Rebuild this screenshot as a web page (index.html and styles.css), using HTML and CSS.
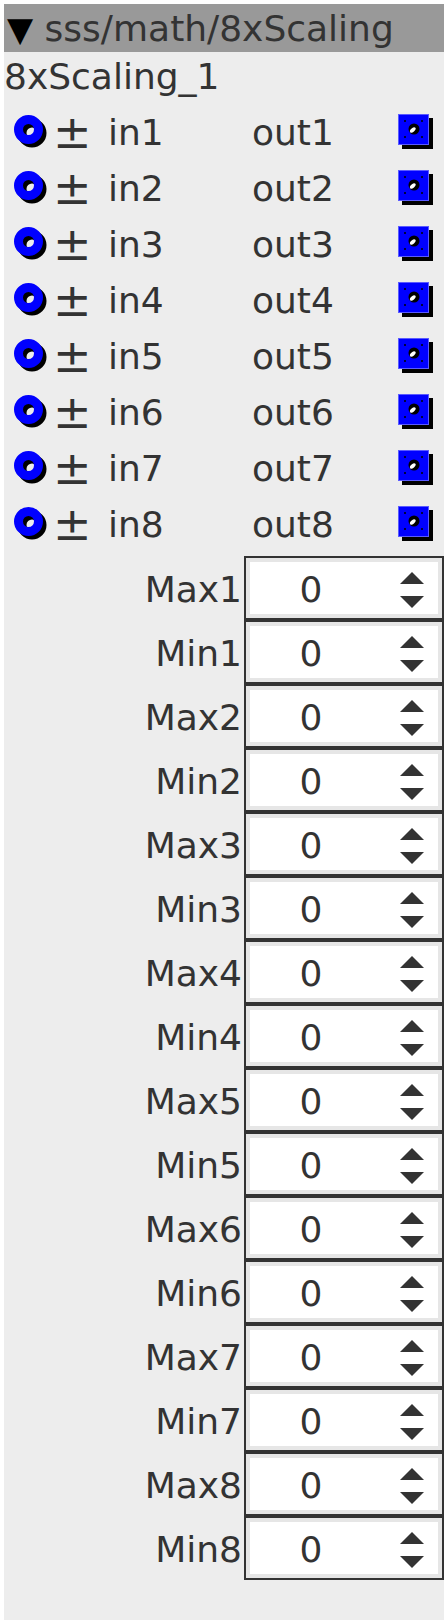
FILE: index.html
```html
<!DOCTYPE html>
<html lang="en">
<head>
   <meta charset="UTF-8">
   <meta name="viewport" content="width=device-width, initial-scale=1.0">
   <title>8xScaling</title>
   <link rel="stylesheet" href="styles.css">
</head>
<body>
   <div class="panel">
      <div class="title"><span class="arrow">&#9660;</span> sss/math/8xScaling</div>
      <div class="name">8xScaling_1</div>

      <div class="ports" id="ports"></div>
      <div class="params" id="params"></div>
   </div>

   <script>
      const ports = document.querySelector("#ports")
      const params = document.querySelector("#params")

      const inPort = `<svg class="port-in" width="36" height="36" viewBox="0 0 36 36">
            <circle cx="18" cy="18" r="10" fill="none" stroke="#000" stroke-width="9"/>
            <circle cx="14.5" cy="14.5" r="10" fill="none" stroke="#0000ff" stroke-width="9"/>
         </svg>`

      const outPort = `<svg class="port-out" width="36" height="36" viewBox="0 0 36 36">
            <rect x="4" y="4" width="31" height="31" fill="#000"/>
            <rect x="0.5" y="0.5" width="30" height="30" fill="#0000ff" stroke="#5a5aff"/>
            <circle cx="7" cy="7" r="1" fill="#000"/>
            <circle cx="24" cy="7" r="1" fill="#000"/>
            <circle cx="7" cy="23" r="1" fill="#000"/>
            <circle cx="24" cy="23" r="1" fill="#000"/>
            <circle cx="16" cy="15" r="5.5" fill="#000"/>
            <ellipse cx="14.8" cy="16" rx="3.4" ry="1.8" transform="rotate(-40 14.8 16)" fill="#fff"/>
         </svg>`

      for (let i = 1; i <= 8; i++) {
         ports.innerHTML += `<div class="port-row">
               ${inPort}
               <span class="pm">&plusmn;</span>
               <span class="in-label">in${i}</span>
               <span class="out-label">out${i}</span>
               ${outPort}
            </div>`
      }

      for (let i = 1; i <= 8; i++) {
         for (const kind of ["Max", "Min"]) {
            params.innerHTML += `<div class="param-row">
                  <label class="param-label">${kind}${i}</label>
                  <div class="spinbox">
                     <span class="value">0</span>
                     <span class="spin"><i class="up"></i><i class="down"></i></span>
                  </div>
               </div>`
         }
      }
   </script>
</body>
</html>
```

FILE: styles.css
```css
body {
   margin: 4px;
   background: #ffffff;
   font-family: "DejaVu Sans", sans-serif;
   color: #333333;
}

.panel {
   background: #ededed;
   height: 1616px;
   font-size: 36px;
}

.title {
   background: #999999;
   height: 48px;
   line-height: 50px;
   padding-left: 3px;
   white-space: nowrap;
}

.arrow {
   font-size: 34px;
   color: #000000;
}

.name {
   height: 52px;
   line-height: 50px;
}

.port-row {
   display: flex;
   align-items: center;
   height: 56px;
}

.port-in {
   margin-left: 10px;
   margin-top: 2px;
   flex: none;
}

.pm {
   margin-left: 3px;
   width: 55px;
   font-size: 46px;
   line-height: 40px;
}

.in-label {
   width: 144px;
}

.out-label {
   width: 146px;
}

.port-out {
   flex: none;
}

.params {
   margin-top: 4px;
}

.param-row {
   display: flex;
   justify-content: flex-end;
   align-items: center;
   height: 64px;
}

.param-label {
   margin-right: 2px;
   padding-top: 3px;
}

.spinbox {
   display: flex;
   align-items: center;
   width: 200px;
   height: 64px;
   box-sizing: border-box;
   border: 2px solid #333333;
   background: #ffffff;
   box-shadow: inset 0 0 0 4px #e6e6e6;
}

.value {
   width: 130px;
   text-align: center;
   padding-top: 3px;
}

.spin {
   display: flex;
   flex-direction: column;
   align-items: center;
   gap: 12px;
   padding-left: 6px;
   padding-top: 4px;
   width: 60px;
}

.spin i {
   display: block;
   width: 0;
   height: 0;
   border-left: 12px solid transparent;
   border-right: 12px solid transparent;
}

.spin .up {
   border-bottom: 12px solid #333333;
}

.spin .down {
   border-top: 12px solid #333333;
}
```
